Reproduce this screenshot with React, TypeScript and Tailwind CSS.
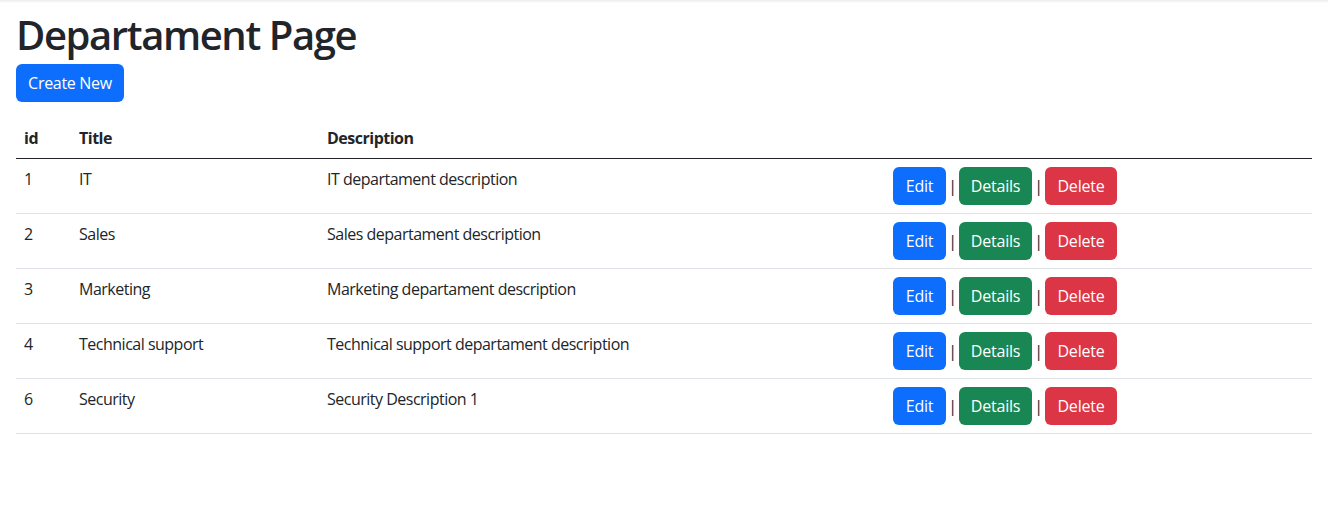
const DEPARTMENTS = [
  { id: 1, title: 'IT', description: 'IT departament description' },
  { id: 2, title: 'Sales', description: 'Sales departament description' },
  { id: 3, title: 'Marketing', description: 'Marketing departament description' },
  { id: 4, title: 'Technical support', description: 'Technical support departament description' },
  { id: 6, title: 'Security', description: 'Security Description 1' },
]

export default function App() {
  return (
    <div className="min-h-[514px] bg-white font-['Open_Sans',sans-serif] text-[16px] leading-6 tracking-[-0.5px] text-[#212529]">
      <div className="h-[3px] bg-gradient-to-b from-[#ececec] to-white" />
      <main className="px-4 pt-[5px]">
        <h1 className="mb-[5px] pt-[3px] text-[40px] font-semibold leading-[48px] tracking-[-1.4px]">Departament Page</h1>
        <button className="w-[108px] rounded-[6px] bg-[#0d6efd] py-[7px] text-center tracking-[-0.3px] text-white">Create New</button>
        <table className="mt-4 w-full border-collapse text-left">
          <thead>
            <tr className="border-b border-[#212529]">
              <th className="w-[55px] p-2 font-bold">id</th>
              <th className="w-[248px] p-2 font-bold">Title</th>
              <th className="w-[566px] p-2 font-bold">Description</th>
              <th className="p-2" />
            </tr>
          </thead>
          <tbody>
            {DEPARTMENTS.map((dep) => (
              <tr key={dep.id} className="border-b border-[#dee2e6]">
                <td className="p-2 align-top">{dep.id}</td>
                <td className="p-2 align-top">{dep.title}</td>
                <td className="p-2 align-top">{dep.description}</td>
                <td className="p-2 align-top">
                  <div className="flex items-center">
                    <button className="w-[53px] rounded-[6px] bg-[#0d6efd] py-[7px] text-center tracking-[-0.2px] text-white">Edit</button>
                    <span className="w-[13px] text-center">|</span>
                    <button className="w-[73px] rounded-[6px] bg-[#198754] py-[7px] text-center tracking-[-0.2px] text-white">Details</button>
                    <span className="w-[13px] text-center">|</span>
                    <button className="w-[72px] rounded-[6px] bg-[#dc3545] py-[7px] text-center tracking-[-0.2px] text-white">Delete</button>
                  </div>
                </td>
              </tr>
            ))}
          </tbody>
        </table>
      </main>
    </div>
  )
}
